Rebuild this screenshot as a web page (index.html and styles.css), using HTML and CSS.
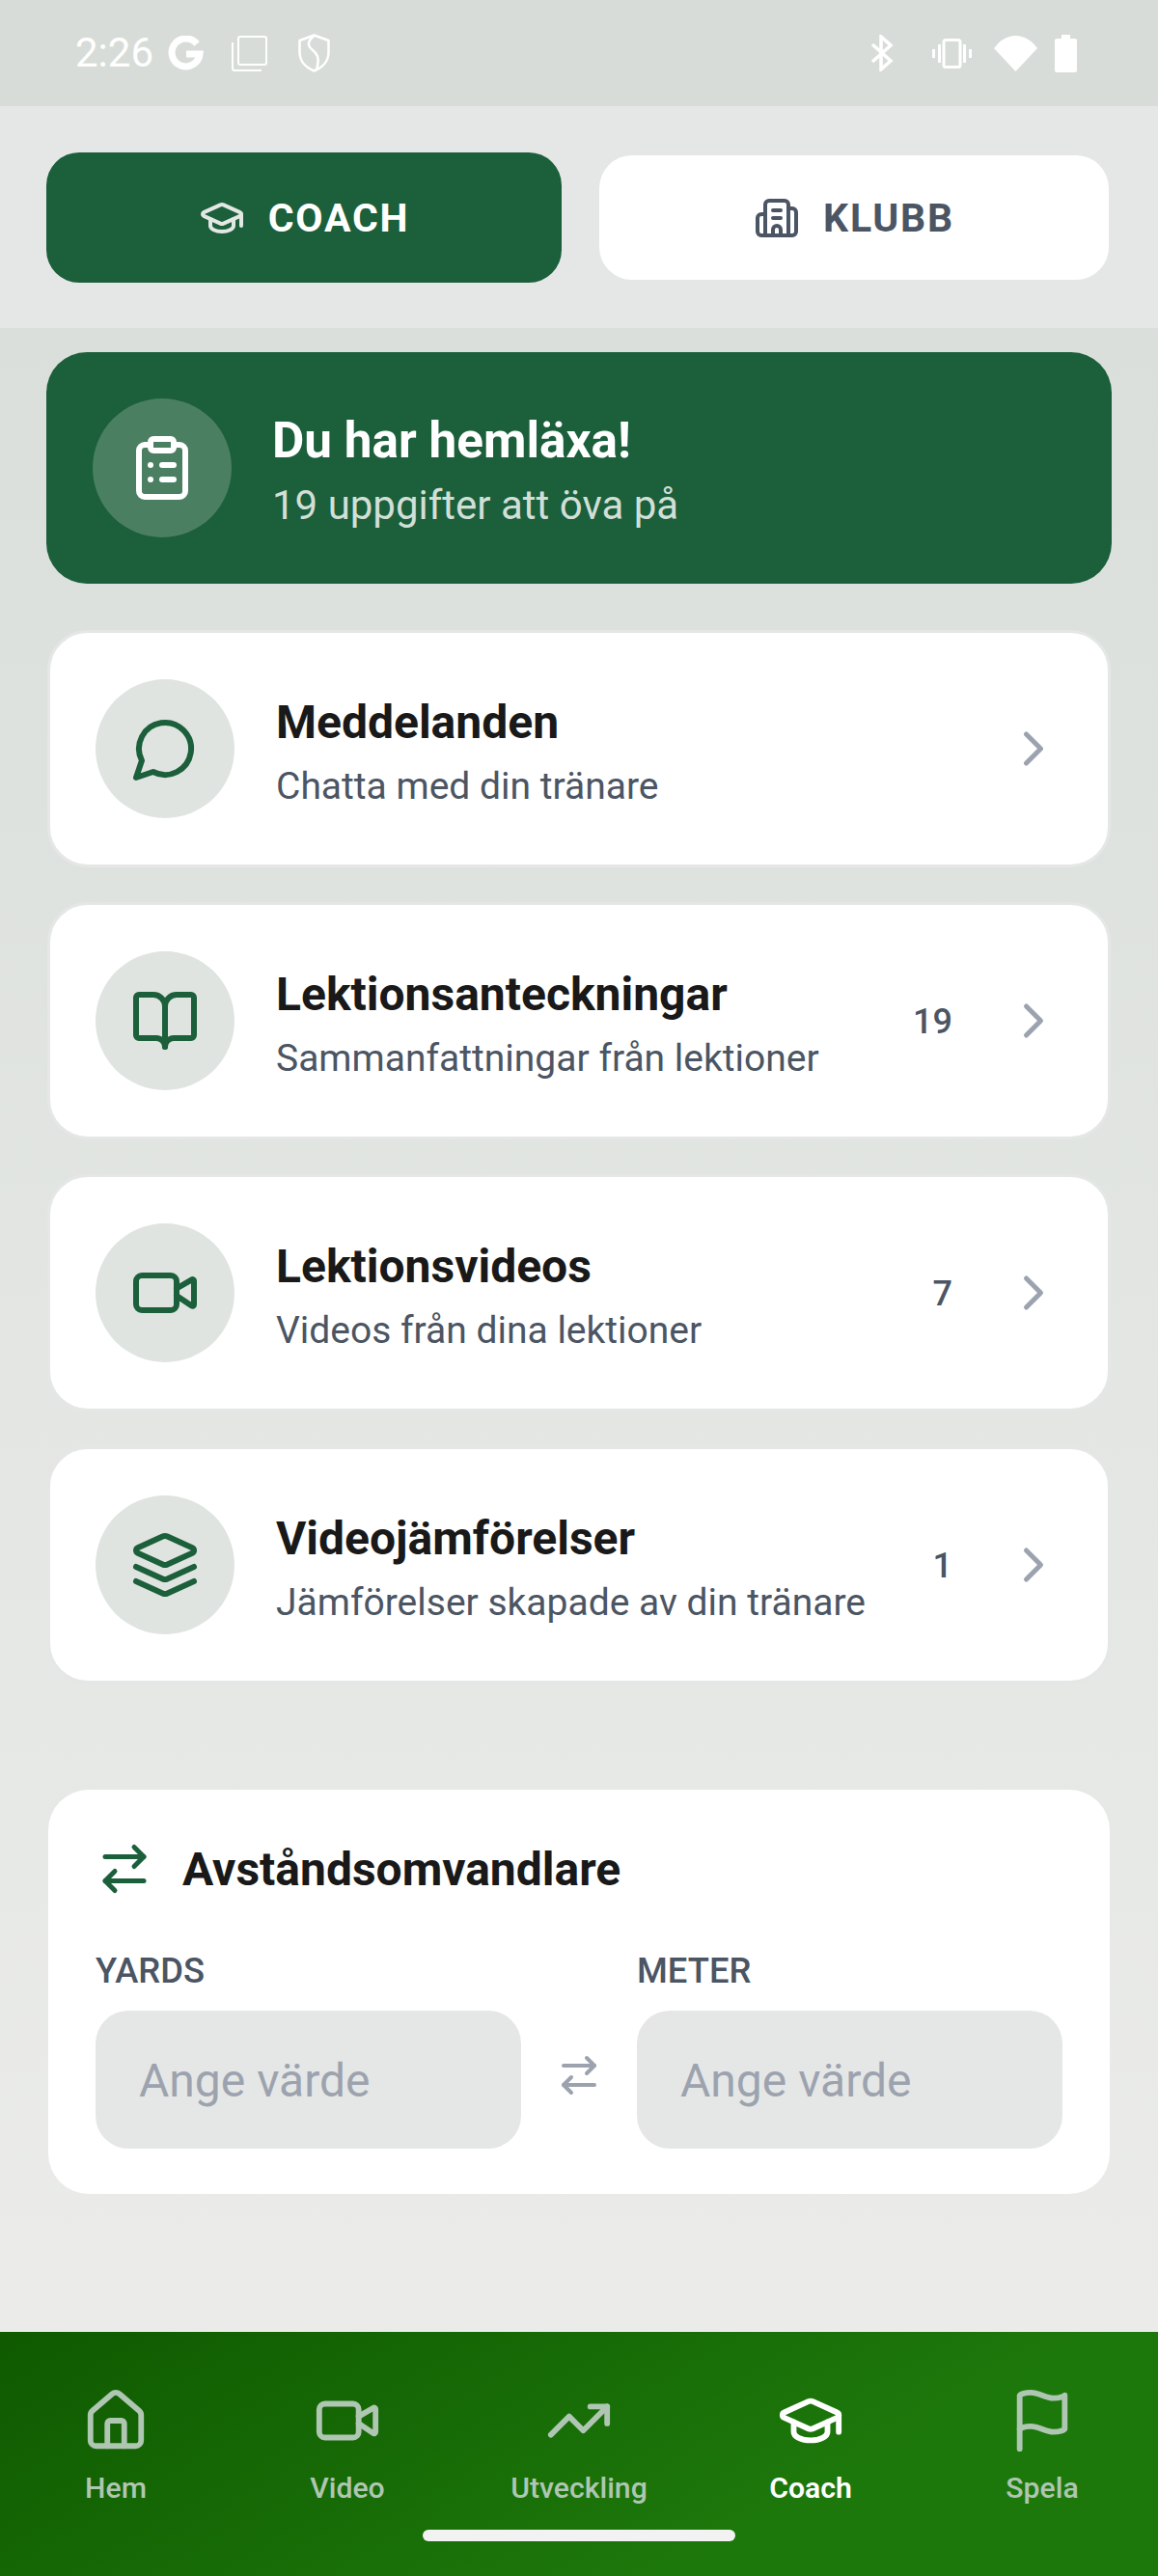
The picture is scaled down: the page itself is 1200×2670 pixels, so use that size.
FILE: index.html
```html
<!DOCTYPE html>
<html lang="sv">
<head>
<meta charset="utf-8">
<title>Coach</title>
<link rel="stylesheet" href="styles.css">
</head>
<body>
<svg class="sprite" aria-hidden="true">
  <symbol id="i-cap" viewBox="0 0 24 24"><path d="M21.42 10.922a1 1 0 0 0-.019-1.838L12.83 5.18a2 2 0 0 0-1.66 0L2.6 9.08a1 1 0 0 0 0 1.832l8.57 3.908a2 2 0 0 0 1.66 0z"/><path d="M22 10v6"/><path d="M6 12.5V16a6 3 0 0 0 12 0v-3.5"/></symbol>
  <symbol id="i-building" viewBox="0 0 24 24"><path d="M10 12h4"/><path d="M10 8h4"/><path d="M14 21v-3a2 2 0 0 0-4 0v3"/><path d="M6 10H4a2 2 0 0 0-2 2v7a2 2 0 0 0 2 2h16a2 2 0 0 0 2-2V9a2 2 0 0 0-2-2h-2"/><path d="M6 21V5a2 2 0 0 1 2-2h8a2 2 0 0 1 2 2v16"/></symbol>
  <symbol id="i-clipboard" viewBox="0 0 24 24"><rect x="8" y="2" width="8" height="4" rx="1"/><path d="M16 4h2a2 2 0 0 1 2 2v14a2 2 0 0 1-2 2H6a2 2 0 0 1-2-2V6a2 2 0 0 1 2-2h2"/><path d="M12 11h4"/><path d="M12 16h4"/><path d="M8 11h.01"/><path d="M8 16h.01"/></symbol>
  <symbol id="i-chat" viewBox="0 0 24 24"><path d="M7.9 20A9 9 0 1 0 4 16.1L2 22Z"/></symbol>
  <symbol id="i-book" viewBox="0 0 24 24"><path d="M12 7v14"/><path d="M3 18a1 1 0 0 1-1-1V4a1 1 0 0 1 1-1h5a4 4 0 0 1 4 4 4 4 0 0 1 4-4h5a1 1 0 0 1 1 1v13a1 1 0 0 1-1 1h-6a3 3 0 0 0-3 3 3 3 0 0 0-3-3z"/></symbol>
  <symbol id="i-video" viewBox="0 0 24 24"><path d="m16 13 5.223 3.482a.5.5 0 0 0 .777-.416V7.87a.5.5 0 0 0-.752-.432L16 10.5"/><rect x="2" y="6" width="14" height="12" rx="2"/></symbol>
  <symbol id="i-layers" viewBox="0 0 24 24"><path d="M12.83 2.18a2 2 0 0 0-1.66 0L2.6 6.08a1 1 0 0 0 0 1.83l8.58 3.91a2 2 0 0 0 1.66 0l8.58-3.9a1 1 0 0 0 0-1.83Z"/><path d="m22 17.65-9.17 4.16a2 2 0 0 1-1.66 0L2 17.65"/><path d="m22 12.65-9.17 4.16a2 2 0 0 1-1.66 0L2 12.65"/></symbol>
  <symbol id="i-chevron" viewBox="0 0 24 24"><path d="m9 18 6-6-6-6"/></symbol>
  <symbol id="i-swap" viewBox="0 0 24 24"><path d="m16 3 4 4-4 4"/><path d="M20 7H4"/><path d="m8 21-4-4 4-4"/><path d="M4 17h16"/></symbol>
  <symbol id="i-house" viewBox="0 0 24 24"><path d="M15 21v-8a1 1 0 0 0-1-1h-4a1 1 0 0 0-1 1v8"/><path d="M3 10a2 2 0 0 1 .709-1.528l7-5.999a2 2 0 0 1 2.582 0l7 5.999A2 2 0 0 1 21 10v9a2 2 0 0 1-2 2H5a2 2 0 0 1-2-2z"/></symbol>
  <symbol id="i-trend" viewBox="0 0 24 24"><polyline points="22 7 13.5 15.5 8.5 10.5 2 17"/><polyline points="16 7 22 7 22 13"/></symbol>
  <symbol id="i-flag" viewBox="0 0 24 24"><path d="M4 15s1-1 4-1 5 2 8 2 4-1 4-1V3s-1 1-4 1-5-2-8-2-4 1-4 1z"/><path d="M4 22v-7"/></symbol>
</svg>

<header class="status">
  <div class="status-left">
    <span class="time">2:26</span>
    <svg class="st-g" viewBox="0 0 37 36"><path d="M30 8.500A14.500 14.500 0 1 0 33 19H19" fill="none" stroke="#fff" stroke-width="7"/></svg>
    <svg class="st-copy" viewBox="0 0 37 37"><rect x="7" y="1" width="29" height="29" rx="2" fill="none" stroke="#fff" stroke-width="2"/><path d="M1 7v27a2 2 0 0 0 2 2h28" fill="none" stroke="#fff" stroke-width="2"/></svg>
    <svg class="st-shield" viewBox="0 0 33 40"><path d="M16.500 1.500 31.500 7v12c0 9-6 16-15 19.500C7.500 35 1.500 28 1.500 19V7Z" fill="none" stroke="#fff" stroke-width="2.500" stroke-linejoin="round"/><path d="M17 1.500C10 7 9 12 14 16c5 4 9 8 5 21" fill="none" stroke="#fff" stroke-width="2.500"/></svg>
  </div>
  <div class="status-right">
    <svg class="st-bt" viewBox="0 0 24 38"><path d="M2 10 21 27 11 36V2l10 9L2 28" fill="none" stroke="#fff" stroke-width="3.500"/></svg>
    <svg class="st-vib" viewBox="0 0 41 31"><rect x="12" y="1.500" width="17" height="28" rx="2" fill="none" stroke="#fff" stroke-width="3"/><path d="M6 6h3v19H6zM32 6h3v19h-3zM0 11h3v9H0zM38 11h3v9h-3z" fill="#fff"/></svg>
    <svg class="st-wifi" viewBox="0 0 45 37"><path d="M22.500 37 0 13C6 5 14 0 22.500 0S39 5 45 13Z" fill="#fff"/></svg>
    <svg class="st-bat" viewBox="0 0 23 39"><path d="M7 0h9v4h5a2 2 0 0 1 2 2v31a2 2 0 0 1-2 2H2a2 2 0 0 1-2-2V6a2 2 0 0 1 2-2h5Z" fill="#fff"/></svg>
  </div>
</header>

<nav class="tabs">
  <button class="tab tab-active"><svg class="ic ic-tab"><use href="#i-cap"/></svg>COACH</button>
  <button class="tab tab-idle"><svg class="ic ic-tab"><use href="#i-building"/></svg>KLUBB</button>
</nav>

<main class="content">
  <section class="homework">
    <div class="hw-circle"><svg class="ic ic-hw"><use href="#i-clipboard"/></svg></div>
    <div class="hw-text">
      <div class="hw-title">Du har hemläxa!</div>
      <div class="hw-sub">19 uppgifter att öva på</div>
    </div>
  </section>

  <div class="list">
    <a class="card">
      <div class="circle"><svg class="ic ic-row"><use href="#i-chat"/></svg></div>
      <div class="card-text"><div class="card-title">Meddelanden</div><div class="card-sub">Chatta med din tränare</div></div>
      <svg class="ic ic-chev"><use href="#i-chevron"/></svg>
    </a>
    <a class="card">
      <div class="circle"><svg class="ic ic-row"><use href="#i-book"/></svg></div>
      <div class="card-text"><div class="card-title">Lektionsanteckningar</div><div class="card-sub">Sammanfattningar från lektioner</div></div>
      <span class="count">19</span>
      <svg class="ic ic-chev"><use href="#i-chevron"/></svg>
    </a>
    <a class="card">
      <div class="circle"><svg class="ic ic-row"><use href="#i-video"/></svg></div>
      <div class="card-text"><div class="card-title">Lektionsvideos</div><div class="card-sub">Videos från dina lektioner</div></div>
      <span class="count">7</span>
      <svg class="ic ic-chev"><use href="#i-chevron"/></svg>
    </a>
    <a class="card">
      <div class="circle"><svg class="ic ic-row"><use href="#i-layers"/></svg></div>
      <div class="card-text"><div class="card-title">Videojämförelser</div><div class="card-sub">Jämförelser skapade av din tränare</div></div>
      <span class="count">1</span>
      <svg class="ic ic-chev"><use href="#i-chevron"/></svg>
    </a>
  </div>

  <section class="converter">
    <div class="conv-head"><svg class="ic ic-conv"><use href="#i-swap"/></svg><h2 class="conv-title">Avståndsomvandlare</h2></div>
    <div class="conv-grid">
      <label class="conv-label" for="yards">YARDS</label>
      <span></span>
      <label class="conv-label" for="meter">METER</label>
      <input class="conv-input" id="yards" placeholder="Ange värde">
      <svg class="ic ic-swap"><use href="#i-swap"/></svg>
      <input class="conv-input" id="meter" placeholder="Ange värde">
    </div>
  </section>
</main>

<footer class="bottom">
  <div class="nav-items">
    <a class="nav-item"><svg class="ic ic-nav"><use href="#i-house"/></svg><span>Hem</span></a>
    <a class="nav-item"><svg class="ic ic-nav"><use href="#i-video"/></svg><span>Video</span></a>
    <a class="nav-item"><svg class="ic ic-nav"><use href="#i-trend"/></svg><span>Utveckling</span></a>
    <a class="nav-item nav-active"><svg class="ic ic-nav"><use href="#i-cap"/></svg><span>Coach</span></a>
    <a class="nav-item"><svg class="ic ic-nav"><use href="#i-flag"/></svg><span>Spela</span></a>
  </div>
  <div class="home-pill"></div>
</footer>
</body>
</html>
```

FILE: styles.css
```css
* { box-sizing: border-box; }
html, body { margin: 0; padding: 0; }
body {
  width: 1200px;
  height: 2670px;
  display: flex;
  flex-direction: column;
  font-family: Roboto, "Liberation Sans", sans-serif;
  background: #e5e7e6;
  overflow: hidden;
}
.sprite { display: none; }
.ic {
  fill: none;
  stroke: currentColor;
  stroke-width: 2;
  stroke-linecap: round;
  stroke-linejoin: round;
  flex: none;
  display: block;
}

/* status bar */
.status {
  height: 110px;
  flex: none;
  background: #d8dcd8;
  display: flex;
  justify-content: space-between;
  align-items: center;
  padding: 0 84px 0 78px;
}
.status-left, .status-right { display: flex; align-items: center; }
.time { color: #fff; font-size: 42px; line-height: 46px; width: 96px; }
.st-g { width: 37px; height: 36px; }
.st-copy { width: 37px; height: 37px; margin-left: 29px; }
.st-shield { width: 33px; height: 40px; margin-left: 32px; }
.st-bt { width: 24px; height: 38px; }
.st-vib { width: 41px; height: 31px; margin-left: 40px; }
.st-wifi { width: 45px; height: 37px; margin-left: 23px; }
.st-bat { width: 23px; height: 39px; margin-left: 18px; }

/* top tabs */
.tabs {
  height: 230px;
  flex: none;
  display: flex;
  align-items: center;
  padding: 1px 51px 0 48px;
  gap: 39px;
  background: #e5e7e6;
}
.tab {
  border: 0;
  display: flex;
  align-items: center;
  justify-content: center;
  gap: 24px;
  font-family: inherit;
  font-weight: 700;
  font-size: 41px;
  letter-spacing: 1.8px;
  padding: 0;
}
.tab-active { width: 534px; height: 135px; border-radius: 34px; background: #1b5f3b; color: #fff; }
.tab-active .ic-tab { color: #e4e8e5; }
.tab-idle { width: 528px; height: 129px; border-radius: 34px; background: #fff; color: #4b5563; }
.ic-tab { width: 48px; height: 48px; }

/* content */
.content {
  flex: 1;
  background: linear-gradient(180deg, #dadfdb 0%, #ebecea 100%);
  padding: 25px 48px 0;
}
.homework {
  height: 240px;
  border-radius: 42px;
  background: #1b5f3b;
  display: flex;
  align-items: center;
  padding: 0 48px;
  gap: 42px;
}
.hw-circle {
  width: 144px;
  height: 144px;
  border-radius: 50%;
  background: #4b7f62;
  display: flex;
  align-items: center;
  justify-content: center;
  color: #fff;
}
.ic-hw { width: 72px; height: 72px; }
.hw-text { padding-top: 7px; }
.hw-title { color: #fff; font-size: 51.3px; line-height: 62px; font-weight: 700; }
.hw-sub { color: #d2dfd7; font-size: 42px; line-height: 54px; margin-top: 9px; }

.list {
  display: flex;
  flex-direction: column;
  gap: 36px;
  padding: 0 1px;
  margin-top: 48px;
}
.card {
  height: 246px;
  border: 3px solid #e5e7e6;
  border-radius: 42px;
  background: #fff;
  display: flex;
  align-items: center;
  padding: 0 48px 0 47px;
}
.circle {
  width: 144px;
  height: 144px;
  border-radius: 50%;
  background: #e0e4e1;
  color: #1b5f3b;
  display: flex;
  align-items: center;
  justify-content: center;
  flex: none;
}
.ic-row { width: 72px; height: 72px; }
.card-text { flex: 1; margin-left: 43px; padding-top: 7px; }
.card-title { color: #191919; font-size: 48px; line-height: 62px; font-weight: 700; }
.card-sub { color: #4b5563; font-size: 39px; line-height: 54px; margin-top: 8px; }
.count { color: #4b5563; font-size: 36px; font-weight: 500; margin-right: 54px; padding-top: 2px; }
.ic-chev { width: 60px; height: 60px; color: #9ca3af; margin-right: -1px; }

.converter {
  margin: 110px 2px 0;
  height: 419px;
  border-radius: 42px;
  background: #fff;
  padding: 52px 49px 0;
}
.conv-head { display: flex; align-items: center; gap: 30px; height: 60px; }
.ic-conv { width: 60px; height: 60px; color: #1b5f3b; }
.conv-title { margin: 0; color: #191919; font-size: 48px; font-weight: 700; }
.conv-grid {
  display: grid;
  grid-template-columns: 441px 120px 441px;
  margin-top: 55px;
  align-items: center;
  justify-items: center;
}
.conv-label { justify-self: start; color: #4b5563; font-size: 36.4px; line-height: 42px; font-weight: 500; margin-bottom: 20px; }
.conv-input {
  width: 441px;
  height: 143px;
  border: 0;
  border-radius: 34px;
  background: #e5e7e6;
  padding: 2px 45px 0;
  font-family: inherit;
  font-size: 48px;
  color: #4b5563;
}
.conv-input::placeholder { color: #9ca3af; opacity: 1; }
.ic-swap { width: 48px; height: 48px; color: #9ca3af; margin-top: -10px; }

/* bottom nav */
.bottom {
  height: 253px;
  flex: none;
  background: linear-gradient(150deg, #0f5a00 0%, #1d780b 70%);
  display: flex;
  flex-direction: column;
  align-items: center;
}
.nav-items { width: 100%; display: grid; grid-template-columns: repeat(5, 240px); padding-top: 57px; }
.nav-item {
  display: flex;
  flex-direction: column;
  align-items: center;
  color: #afc6b3;
  font-size: 30.2px;
  font-weight: 500;
  line-height: 36px;
  gap: 17px;
}
.nav-active { color: #fff; font-weight: 600; }
.ic-nav { width: 70px; height: 70px; }
.home-pill { width: 324px; height: 12px; border-radius: 6px; background: #f1f2f1; margin-top: 25px; }
```
